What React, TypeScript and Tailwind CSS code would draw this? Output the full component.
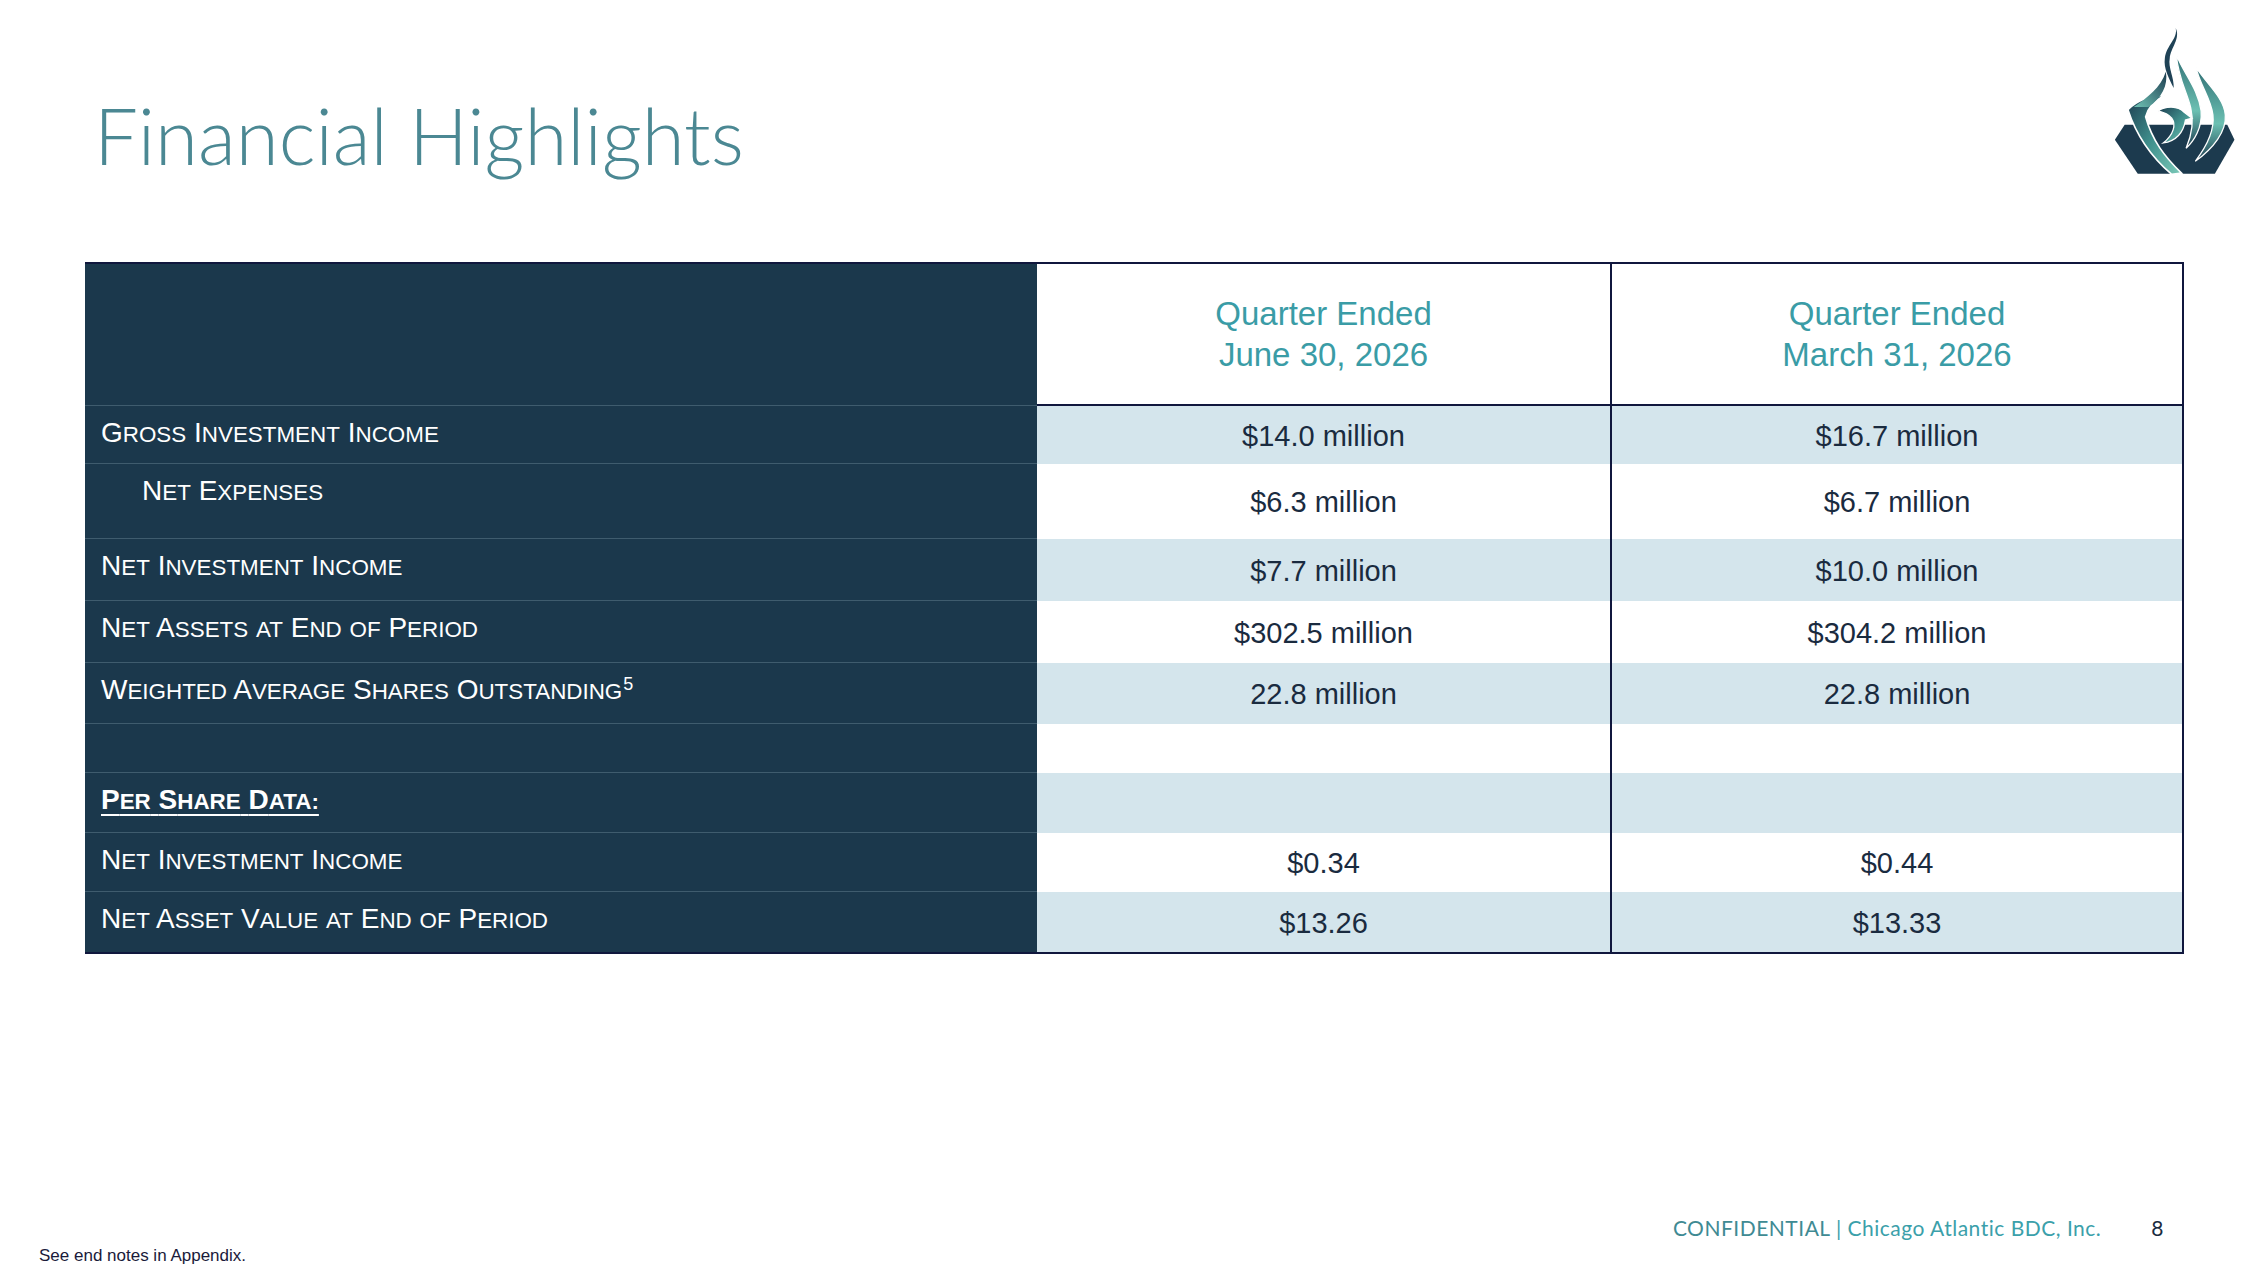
import React from 'react';

const LABEL = 'font-["Liberation_Sans",Arial,sans-serif] text-white';

function SmallCaps({ text }: { text: string }) {
  // PowerPoint-style small caps: leading capital full size, rest at 0.8em
  const words = text.split(' ');
  return (
    <>
      {words.map((word, i) => {
        const first = word[0];
        const isCap = first === first.toUpperCase() && /[A-Za-z]/.test(first);
        return (
          <React.Fragment key={i}>
            {i > 0 && ' '}
            {isCap ? (
              <>
                {first}
                <span className="text-[0.8em]">{word.slice(1).toUpperCase()}</span>
              </>
            ) : (
              <span className="text-[0.8em]">{word.toUpperCase()}</span>
            )}
          </React.Fragment>
        );
      })}
    </>
  );
}

function Logo() {
  return (
    <svg width="122" height="149" viewBox="190 72 372 456" fill="none">
      <defs>
        <linearGradient id="tealA" x1="0" y1="0" x2="1" y2="1">
          <stop offset="0" stopColor="#1d3d50" />
          <stop offset="0.5" stopColor="#3f8f8c" />
          <stop offset="1" stopColor="#7ccab9" />
        </linearGradient>
        <linearGradient id="tealB" x1="0" y1="0" x2="0" y2="1">
          <stop offset="0" stopColor="#2f6f74" />
          <stop offset="0.6" stopColor="#6cc0b2" />
          <stop offset="1" stopColor="#1d3d50" />
        </linearGradient>
        <linearGradient id="tealC" x1="1" y1="0" x2="0" y2="1">
          <stop offset="0" stopColor="#1d3d50" />
          <stop offset="1" stopColor="#6fc2b4" />
        </linearGradient>
      </defs>
      <path d="M192 420 L222 374 L536 374 L558 420 L498 524 L262 524 Z" fill="#1c3a4e" />
      <path
        d="M232 328 C262 298 302 286 344 284 C312 302 292 324 286 350 C306 422 344 472 396 522 L366 526 C312 480 262 420 232 328 Z"
        fill="url(#tealA)"
        stroke="#fff"
        strokeWidth="5"
      />
      <path d="M250 320 C292 290 332 262 348 212 C356 254 334 294 294 320 Z" fill="url(#tealC)" />
      <path
        d="M378 78 C394 110 362 140 360 170 C354 200 374 230 372 262 C358 232 340 202 345 170 C350 130 386 110 378 78 Z"
        fill="#1f4256"
      />
      <path
        d="M380 160 C404 220 446 262 456 332 C460 384 434 424 410 446 C428 404 434 362 424 322 C412 272 386 232 380 160 Z"
        fill="url(#tealB)"
        stroke="#fff"
        strokeWidth="4"
      />
      <path
        d="M440 198 C474 250 526 292 530 344 C534 394 494 446 438 486 C470 444 498 394 492 344 C486 294 452 252 440 198 Z"
        fill="url(#tealB)"
        stroke="#fff"
        strokeWidth="4"
      />
      <path
        d="M324 332 C348 316 384 316 404 336 L428 354 L408 360 C402 396 380 424 340 430 C372 404 380 374 366 354 C356 342 340 336 324 332 Z"
        fill="url(#tealA)"
        stroke="#fff"
        strokeWidth="4"
      />
    </svg>
  );
}

type Row = {
  label: string;
  a: string;
  b: string;
  h: string;
  fill: string;
  indent?: boolean;
  sup?: string;
  kind?: 'section';
};

const rows: Row[] = [
  { label: 'Gross Investment Income', a: '$14.0 million', b: '$16.7 million', h: 'h-[58px]', fill: 'bg-[#d4e5ec]' },
  { label: 'Net Expenses', a: '$6.3 million', b: '$6.7 million', h: 'h-[75px]', fill: 'bg-white', indent: true },
  { label: 'Net Investment Income', a: '$7.7 million', b: '$10.0 million', h: 'h-[62px]', fill: 'bg-[#d4e5ec]' },
  { label: 'Net Assets at End of Period', a: '$302.5 million', b: '$304.2 million', h: 'h-[62px]', fill: 'bg-white' },
  { label: 'Weighted Average Shares Outstanding', a: '22.8 million', b: '22.8 million', h: 'h-[61px]', fill: 'bg-[#d4e5ec]', sup: '5' },
  { label: '', a: '', b: '', h: 'h-[49px]', fill: 'bg-white' },
  { label: 'Per Share Data:', a: '', b: '', h: 'h-[60px]', fill: 'bg-[#d4e5ec]', kind: 'section' },
  { label: 'Net Investment Income', a: '$0.34', b: '$0.44', h: 'h-[59px]', fill: 'bg-white' },
  { label: 'Net Asset Value at End of Period', a: '$13.26', b: '$13.33', h: 'h-[60px]', fill: 'bg-[#d4e5ec]' },
];

const VALUE =
  'flex items-center justify-center pt-[3px] font-["Liberation_Sans",Arial,sans-serif] text-[29px] text-[#1a2b3f]';

export default function App() {
  return (
    <div className="flex h-[1275px] w-[2267px] flex-col overflow-hidden bg-white">
      <div className="flex items-start justify-between pl-[94px] pr-[31px] pt-[26px]">
        <h1 className='mt-[70px] font-["Lato",sans-serif] text-[78px] font-light leading-none text-[#4b8893]'>
          Financial Highlights
        </h1>
        <Logo />
      </div>

      <div className="ml-[85px] mt-[87px] w-[2099px] border-b-2 border-r-2 border-t-2 border-[#10173d]">
        <div className="grid h-[142px] grid-cols-[952px_573px_572px]">
          <div className="border-b border-[#3f5c6e] bg-[#1b384c]" />
          {['June 30, 2026', 'March 31, 2026'].map((d, i) => (
            <div
              key={d}
              className={`flex flex-col items-center justify-center border-b-2 border-[#10173d] bg-white font-["Liberation_Sans",Arial,sans-serif] text-[33px] leading-[41px] text-[#3a9ca6] ${
                i === 1 ? 'border-l-2' : ''
              }`}
            >
              <span>Quarter Ended</span>
              <span>{d}</span>
            </div>
          ))}
        </div>
        {rows.map((r, idx) => (
          <div key={idx} className={`grid grid-cols-[952px_573px_572px] ${r.h}`}>
            <div
              className={`${LABEL} bg-[#1b384c] pt-[11px] text-[28px] leading-[32px] ${
                idx < rows.length - 1 ? 'border-b border-[#3f5c6e]' : ''
              } ${r.indent ? 'pl-[57px]' : 'pl-[16px]'}`}
            >
              {r.kind === 'section' ? (
                <span className="font-bold underline decoration-2 underline-offset-[5px]">
                  <SmallCaps text={r.label} />
                </span>
              ) : (
                r.label && <SmallCaps text={r.label} />
              )}
              {r.sup && <sup className="ml-[1px] text-[18px]">{r.sup}</sup>}
            </div>
            <div className={`${VALUE} ${r.fill}`}>{r.a}</div>
            <div className={`${VALUE} ${r.fill} border-l-2 border-[#10173d]`}>{r.b}</div>
          </div>
        ))}
      </div>

      <div className="mt-auto flex flex-col pb-[11px]">
        <div className='flex items-center justify-end gap-[50px] pr-[103px] font-["Lato",sans-serif] text-[21px] leading-none tracking-[0.5px]'>
          <span className="text-[#3ba0aa]">
            <span className="text-[#3f8a93]">CONFIDENTIAL</span> | Chicago Atlantic BDC, Inc.
          </span>
          <span className="text-[#1a2b3f]">8</span>
        </div>
        <div className='mt-[9px] pl-[39px] font-["Liberation_Sans",Arial,sans-serif] text-[17px] leading-none text-[#1a1a3a]'>
          See end notes in Appendix.
        </div>
      </div>
    </div>
  );
}
